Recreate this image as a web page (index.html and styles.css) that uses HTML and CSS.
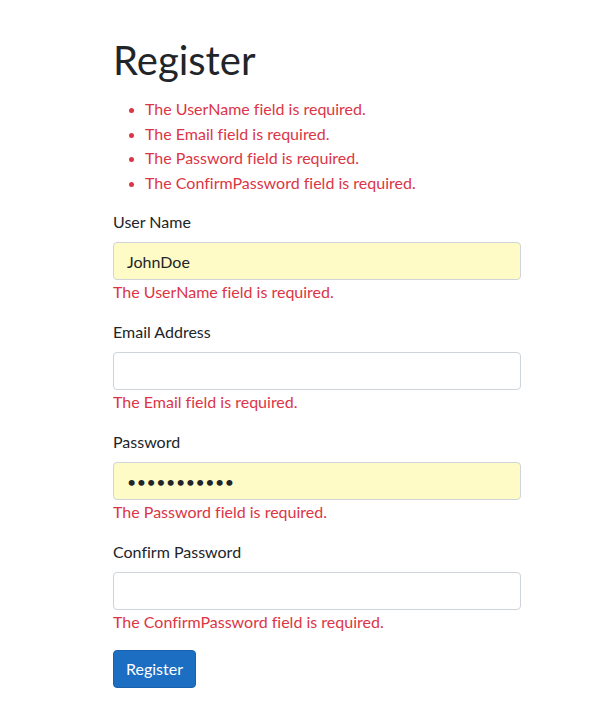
FILE: index.html
```html
<!DOCTYPE html>
<html lang="en">
<head>
<meta charset="utf-8">
<title>Register</title>
<link rel="stylesheet" href="styles.css">
</head>
<body>
<main class="page">
  <h1 class="title">Register</h1>
  <ul class="summary">
    <li>The UserName field is required.</li>
    <li>The Email field is required.</li>
    <li>The Password field is required.</li>
    <li>The ConfirmPassword field is required.</li>
  </ul>
  <form class="form">
    <div class="group">
      <label class="label" for="u">User Name</label>
      <input class="control filled" id="u" type="text" value="JohnDoe">
      <span class="error">The UserName field is required.</span>
    </div>
    <div class="group">
      <label class="label" for="e">Email Address</label>
      <input class="control" id="e" type="text" value="">
      <span class="error">The Email field is required.</span>
    </div>
    <div class="group">
      <label class="label" for="p">Password</label>
      <input class="control filled" id="p" type="password" value="password123">
      <span class="error">The Password field is required.</span>
    </div>
    <div class="group">
      <label class="label" for="c">Confirm Password</label>
      <input class="control" id="c" type="password" value="">
      <span class="error">The ConfirmPassword field is required.</span>
    </div>
    <button class="btn" type="button">Register</button>
  </form>
</main>
</body>
</html>
```
FILE: styles.css
```css
* { box-sizing: border-box; }
html, body { margin: 0; padding: 0; background: #fff; }
body {
  font-family: "Segoe UI", Lato, "Liberation Sans", sans-serif;
  font-size: 16px;
  line-height: 24px;
  color: #212529;
  font-variant-ligatures: none;
}
.page {
  width: 408px;
  margin-left: 113px;
  padding-top: 36px;
}
.title {
  font-size: 40px;
  font-weight: 400;
  line-height: 48px;
  margin: 0 0 13px 0;
}
.summary {
  margin: 0 0 15px 0;
  padding-left: 32px;
  color: #dc3545;
}
.summary li { line-height: 24.5px; }
.summary li::marker { font-size: 14px; }
.group {
  display: flex;
  flex-direction: column;
  margin-bottom: 16px;
}
.label {
  display: block;
  margin-bottom: 8px;
}
.control {
  display: block;
  width: 100%;
  height: 38px;
  padding: 6px 12px 6px 13px;
  font: inherit;
  font-variant-ligatures: none;
  color: #495057;
  background: #fff;
  border: 1px solid #ced4da;
  border-radius: 4px;
  outline: none;
}
.control.filled {
  background: #fffbc7;
  color: #212529;
}
.control[type="password"] {
  letter-spacing: 0.5px;
}
.error {
  color: #dc3545;
}
.btn {
  display: inline-block;
  align-self: flex-start;
  height: 38px;
  padding: 6px 12px;
  font: inherit;
  color: #fff;
  background: #1b6ec2;
  border: 1px solid #1861ac;
  border-radius: 4px;
}
```
